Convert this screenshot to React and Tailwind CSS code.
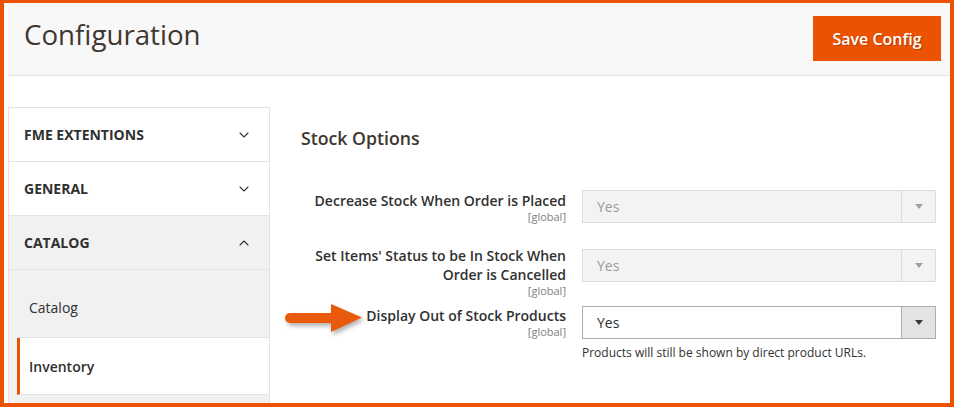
import { ChevronDown, ChevronUp } from 'lucide-react'

const font = { fontFamily: '"Open Sans", "Liberation Sans", sans-serif' }

function Caret({ color }) {
  return (
    <svg width="8" height="5" viewBox="0 0 8 5">
      <polygon points="0,0 8,0 4,5" fill={color} />
    </svg>
  )
}

function Select({ disabled }) {
  return (
    <div
      className={
        'flex h-[33px] w-[354px] border ' +
        (disabled ? 'border-[#dcdcdc] bg-[#f3f3f3]' : 'border-[#adadad] bg-white')
      }
    >
      <div className={'flex flex-1 items-center pl-[14px] text-[14px] ' + (disabled ? 'text-[#9a9a9a]' : 'text-[#303030]')}>
        Yes
      </div>
      <div
        className={
          'flex w-[34px] items-center justify-center border-l ' +
          (disabled ? 'border-[#dcdcdc] bg-[#f3f3f3]' : 'border-[#adadad] bg-[#e3e3e3]')
        }
      >
        <Caret color={disabled ? '#a0a0a0' : '#41362f'} />
      </div>
    </div>
  )
}

function SideGroup({ title, open, active }) {
  return (
    <div
      className={
        'flex h-[54px] items-center justify-between border-b border-[#e3e3e3] pl-[15px] pr-[17px] ' +
        (active ? 'bg-[#f1f1f1]' : 'bg-white')
      }
    >
      <span className="text-[14px] font-bold text-[#303030]">{title}</span>
      {open ? (
        <ChevronUp size={16} strokeWidth={1.6} className="text-[#41362f]" />
      ) : (
        <ChevronDown size={16} strokeWidth={1.6} className="text-[#41362f]" />
      )}
    </div>
  )
}

export default function App() {
  return (
    <div
      style={font}
      className="h-[407px] w-[954px] overflow-hidden border-x-4 border-b-4 border-t-[3px] border-[#eb5202] bg-white pl-1"
    >
      <div className="flex h-[73px] items-center justify-between border-b border-[#e3e3e3] bg-[#f8f8f8] pl-4 pr-[9px]">
        <h1 className="-mt-[8px] text-[27.7px] leading-none text-[#41362f]">Configuration</h1>
        <button className="-mt-[1px] h-[45px] w-[128px] bg-[#eb5202] text-[16px] font-semibold text-white [text-shadow:1px_1px_0_rgba(0,0,0,0.25)]">
          Save Config
        </button>
      </div>

      <div className="flex pt-[31px]">
        <div className="w-[262px] border-x border-t border-[#e3e3e3]">
          <SideGroup title="FME EXTENTIONS" />
          <SideGroup title="GENERAL" />
          <SideGroup title="CATALOG" open active />
          <div className="bg-[#f1f1f1] pl-2">
            <div className="flex h-[68px] items-center border-b border-[#e3e3e3] pl-[12px] pt-[8px] text-[14px] text-[#303030]">
              Catalog
            </div>
            <div className="flex h-[57px] items-center border-b border-l-[3px] border-[#e3e3e3] border-l-[#eb5202] bg-white pl-[9px] text-[14px] font-semibold text-[#303030]">
              Inventory
            </div>
            <div className="h-[20px]"></div>
          </div>
        </div>

        <div className="flex-1 pl-[31px] pr-[14px] pt-[19px]">
          <h2 className="text-[17.7px] font-semibold leading-[24px] text-[#41362f]">Stock Options</h2>

          <div className="mt-[40px] flex gap-4">
            <div className="w-[265px] pt-[1px] text-right">
              <div className="text-[14px] font-semibold leading-[19px] text-[#303030]">Decrease Stock When Order is Placed</div>
              <div className="text-[11px] leading-[14px] text-[#808080]">[global]</div>
            </div>
            <Select disabled />
          </div>

          <div className="mt-[22px] flex gap-4">
            <div className="w-[265px] text-right">
              <div className="text-[14px] font-semibold leading-[19px] text-[#303030]">
                Set Items' Status to be In Stock When Order is Cancelled
              </div>
              <div className="text-[11px] leading-[14px] text-[#808080]">[global]</div>
            </div>
            <div className="pt-[3px]">
              <Select disabled />
            </div>
          </div>

          <div className="mt-[7px] flex gap-4">
            <div className="relative w-[265px] pt-[1px] text-right">
              <svg
                className="absolute left-[-17px] top-[-2px] drop-shadow-[2px_3px_2px_rgba(0,0,0,0.3)]"
                width="80"
                height="32"
                viewBox="0 0 80 32"
              >
                <rect x="1" y="10" width="52" height="10" rx="5" fill="#e95a0c" />
                <polygon points="47,1 78,14.5 47,29" fill="#e95a0c" />
              </svg>
              <div className="text-[14px] font-semibold leading-[19px] text-[#303030]">Display Out of Stock Products</div>
              <div className="text-[11px] leading-[14px] text-[#808080]">[global]</div>
            </div>
            <div className="pt-[1px]">
              <Select />
              <div className="mt-[6px] text-[12px] leading-[16px] text-[#303030]">
                Products will still be shown by direct product URLs.
              </div>
            </div>
          </div>
        </div>
      </div>
    </div>
  )
}
